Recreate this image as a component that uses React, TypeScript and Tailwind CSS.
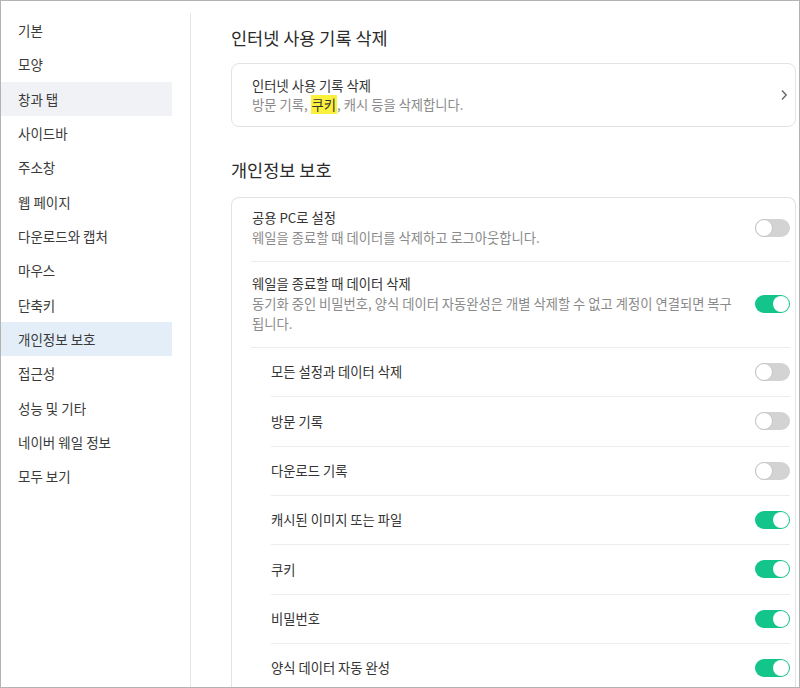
import React from "react";

const font = { fontFamily: '"Noto Sans CJK KR", "Noto Sans", sans-serif' };

const menu = [
    "기본",
    "모양",
    "창과 탭",
    "사이드바",
    "주소창",
    "웹 페이지",
    "다운로드와 캡처",
    "마우스",
    "단축키",
    "개인정보 보호",
    "접근성",
    "성능 및 기타",
    "네이버 웨일 정보",
    "모두 보기",
];

const subItems = [
    { label: "모든 설정과 데이터 삭제", on: false },
    { label: "방문 기록", on: false },
    { label: "다운로드 기록", on: false },
    { label: "캐시된 이미지 또는 파일", on: true },
    { label: "쿠키", on: true },
    { label: "비밀번호", on: true },
    { label: "양식 데이터 자동 완성", on: true },
];

const Toggle = ({ on }: { on: boolean }) => {
    if (on) {
        return (
            <div className="flex h-[18px] w-[35px] shrink-0 items-center justify-end rounded-full bg-[#13c48b] pr-[1px]">
                <div className="h-[16px] w-[16px] rounded-full bg-white" />
            </div>
        );
    }
    return (
        <div className="flex h-[18px] w-[35px] shrink-0 items-center rounded-full bg-[#d3d3d3]">
            <div className="h-[18px] w-[18px] rounded-full border border-[#c4c4c4] bg-white" />
        </div>
    );
};

const App = () => {
    return (
        <div
            className="flex h-[688px] w-[800px] overflow-hidden border border-[#b3b3b3] bg-white text-[#333]"
            style={font}
        >
            {/* sidebar */}
            <div className="w-[189px] shrink-0 pt-3">
                {menu.map((item) => (
                    <div
                        key={item}
                        className={
                            "flex h-[34.33px] w-[171px] items-center pl-[17px] text-[13.5px] text-[#3a3a3a] " +
                            (item === "창과 탭"
                                ? "bg-[#f1f2f5]"
                                : item === "개인정보 보호"
                                ? "bg-[#e3eef9]"
                                : "")
                        }
                    >
                        {item}
                    </div>
                ))}
            </div>

            {/* main */}
            <div className="mt-3 flex-1 border-l border-[#e6e6e6] pl-[40px] pr-[3px] pt-[13px]">
                <h2 className="h-[24px] text-[17.5px] leading-[24px] text-[#2b2b2b]">
                    인터넷 사용 기록 삭제
                </h2>
                <div className="mt-[13px] flex h-[64px] items-center rounded-lg border border-[#e3e3e3] pl-[20px] pr-[7px]">
                    <div className="flex-1 text-[13.3px] leading-[19px]">
                        <div className="text-[#333]">인터넷 사용 기록 삭제</div>
                        <div className="text-[#8a8a8a]">
                            방문 기록,{" "}
                            <span className="bg-[#fbf03c] px-[1px] text-[#333]">
                                쿠키
                            </span>
                            , 캐시 등을 삭제합니다.
                        </div>
                    </div>
                    <svg width="8" height="12" viewBox="0 0 8 12" fill="none">
                        <path
                            d="M2 1.5 L6.2 6 L2 10.5"
                            stroke="#666"
                            strokeWidth="1.4"
                        />
                    </svg>
                </div>

                <h2 className="mt-[31px] h-[24px] text-[17.5px] leading-[24px] text-[#2b2b2b]">
                    개인정보 보호
                </h2>
                <div className="mt-[15px] rounded-t-lg border border-b-0 border-[#e3e3e3] pl-[19px] pr-[5px]">
                    <div className="flex items-center border-b border-[#ececec] pb-[13px] pl-[1px] pt-[10px]">
                        <div className="flex-1 text-[13.3px] leading-[20px]">
                            <div className="text-[#333]">공용 PC로 설정</div>
                            <div className="text-[#8a8a8a]">
                                웨일을 종료할 때 데이터를 삭제하고 로그아웃합니다.
                            </div>
                        </div>
                        <Toggle on={false} />
                    </div>
                    <div className="flex items-center border-b border-[#ececec] pb-[13px] pl-[1px] pt-[12px]">
                        <div className="flex-1 pr-[12px] text-[13.3px] leading-[20px]">
                            <div className="text-[#333]">웨일을 종료할 때 데이터 삭제</div>
                            <div className="whitespace-nowrap text-[#8a8a8a]">
                                동기화 중인 비밀번호, 양식 데이터 자동완성은 개별 삭제할 수 없고 계정이 연결되면 복구
                                <br />
                                됩니다.
                            </div>
                        </div>
                        <Toggle on={true} />
                    </div>
                    <div className="ml-[20px]">
                        {subItems.map((s) => (
                            <div
                                key={s.label}
                                className="flex h-[49.33px] items-center border-b border-[#ececec] text-[13.3px]"
                            >
                                <div className="flex-1 text-[#333]">{s.label}</div>
                                <Toggle on={s.on} />
                            </div>
                        ))}
                    </div>
                </div>
            </div>
        </div>
    );
};

export default App;
